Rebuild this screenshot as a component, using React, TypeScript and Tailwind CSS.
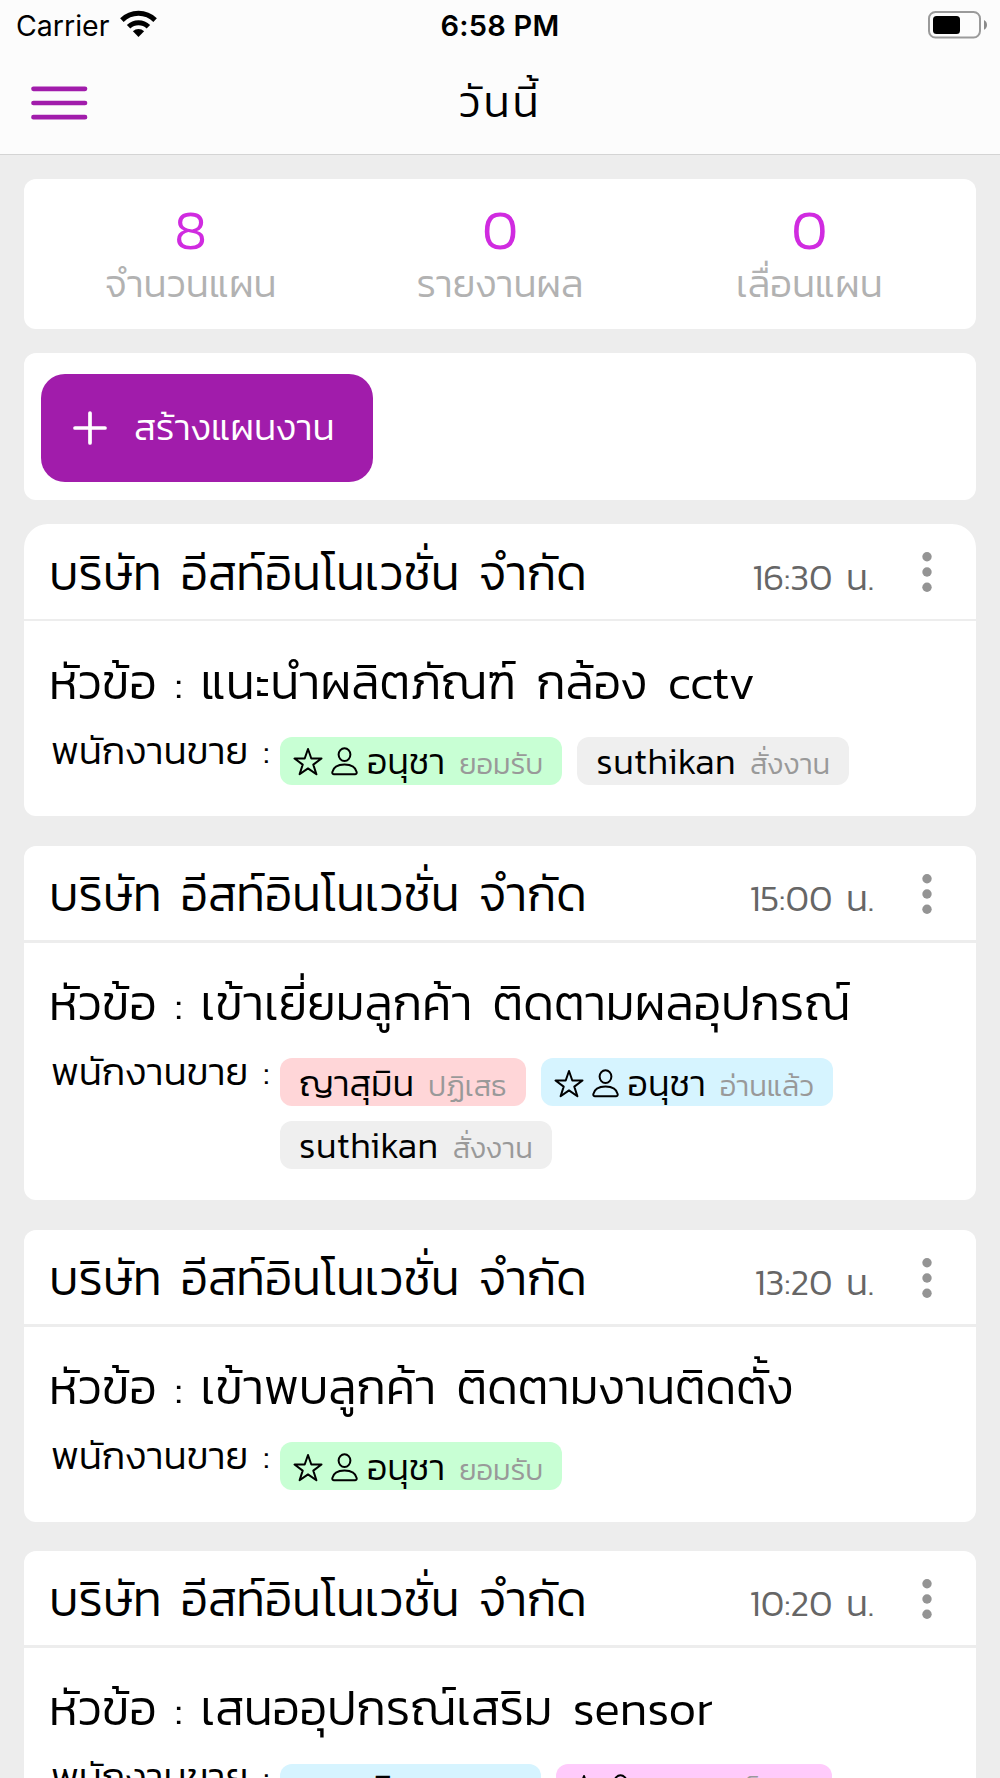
import clsx from 'clsx'

type Member = {
  name: string
  status: string
  color: string
  owner?: boolean
}

type Plan = {
  time: string
  topic: string
  members: Member[]
}

const company = 'บริษัท อีสท์อินโนเวชั่น จำกัด'

const stats = [
  { value: 8, label: 'จำนวนแผน' },
  { value: 0, label: 'รายงานผล' },
  { value: 0, label: 'เลื่อนแผน' },
]

const plans: Plan[] = [
  {
    time: '16:30 น.',
    topic: 'แนะนำผลิตภัณฑ์ กล้อง cctv',
    members: [
      { name: 'อนุชา', status: 'ยอมรับ', color: 'bg-[#c8ffd4]', owner: true },
      { name: 'suthikan', status: 'สั่งงาน', color: 'bg-[#efefef]' },
    ],
  },
  {
    time: '15:00 น.',
    topic: 'เข้าเยี่ยมลูกค้า ติดตามผลอุปกรณ์',
    members: [
      { name: 'ญาสุมิน', status: 'ปฏิเสธ', color: 'bg-[#ffd6d8]' },
      { name: 'อนุชา', status: 'อ่านแล้ว', color: 'bg-[#d6f4ff]', owner: true },
      { name: 'suthikan', status: 'สั่งงาน', color: 'bg-[#efefef]' },
    ],
  },
  {
    time: '13:20 น.',
    topic: 'เข้าพบลูกค้า ติดตามงานติดตั้ง',
    members: [
      { name: 'อนุชา', status: 'ยอมรับ', color: 'bg-[#c8ffd4]', owner: true },
    ],
  },
  {
    time: '10:20 น.',
    topic: 'เสนออุปกรณ์เสริม sensor',
    members: [
      { name: 'ญาสุมิน', status: 'อ่านแล้ว', color: 'bg-[#d6f4ff]' },
      { name: 'อนุชา', status: 'เช็คอิน', color: 'bg-[#ffcbfb]', owner: true },
    ],
  },
]

function WifiIcon() {
  return (
    <svg className="-mt-[5px]" width="37" height="27" viewBox="0 0 37 27">
      <path d="M18.5 27l-5.6-5.800a8.200 8.200 0 0 1 11.200 0z" />
      <path d="M8.600 16.800a14.200 14.200 0 0 1 19.800 0" fill="none" stroke="#000" strokeWidth="5" />
      <path d="M1.900 10.100a23.600 23.600 0 0 1 33.200 0" fill="none" stroke="#000" strokeWidth="5" />
    </svg>
  )
}

function BatteryIcon() {
  return (
    <svg className="-mt-[3px]" width="60" height="28" viewBox="0 0 60 28">
      <rect x="1" y="1" width="51" height="25.500" rx="6.500" fill="none" stroke="#9a9a9a" strokeWidth="2" />
      <rect x="5" y="5" width="27" height="18" rx="3.500" />
      <path d="M56 9c2 1 3 3 3 4.900s-1 3.900-3 4.900z" fill="#8a8a8a" />
    </svg>
  )
}

function MenuIcon() {
  return (
    <svg width="57" height="34" viewBox="0 0 57 34" stroke="#a11cab" strokeWidth="4.700" strokeLinecap="round">
      <path d="M2.500 2.800h51.500M2.500 17h51.500M2.500 31.200h51.500" />
    </svg>
  )
}

function OwnerIcons() {
  return (
    <span className="-ml-[6px] mr-[9px] flex gap-[8px] pt-[2px]">
      <svg width="30" height="29" viewBox="0 0 30 29" fill="none" stroke="#000" strokeWidth="2" strokeLinejoin="round">
        <path d="M15 2l3.300 9.500h10.200l-8.200 6.100 3.100 9.700-8.400-5.900-8.400 5.900 3.100-9.700-8.200-6.100h10.200z" />
      </svg>
      <svg width="27" height="29" viewBox="0 0 27 29" fill="none" stroke="#000" strokeWidth="2">
        <ellipse cx="13.500" cy="7.600" rx="5.900" ry="6.400" />
        <path d="M3 27.200c-1.200 0-1.900-.9-1.700-2.100 1-4.900 5.600-7.700 12.200-7.700s11.200 2.800 12.200 7.700c.2 1.200-.5 2.100-1.700 2.100z" />
      </svg>
    </span>
  )
}

function MemberChip({ member }: { member: Member }) {
  const latin = /^[a-z]+$/.test(member.name)

  return (
    <div className={clsx('flex h-12 items-center rounded-xl pl-[19px] pr-[19px]', member.color)}>
      {member.owner && <OwnerIcons />}
      <div className="flex items-baseline gap-[14px] pt-[5px] leading-[43px]">
        <span className={clsx('text-[36px]', latin && 'tracking-[0.5px]')}>{member.name}</span>
        <span className="text-[29.33px] text-[#999]">{member.status}</span>
      </div>
    </div>
  )
}

function PlanCard({ plan, first }: { plan: Plan; first: boolean }) {
  return (
    <section className={clsx('rounded-xl bg-white pb-[31.33px]', first && 'rounded-t-3xl')}>
      <div className="flex h-[94.33px] items-center pl-[25px] pr-[44px]">
        <div className="flex flex-1 items-baseline justify-between pt-[7px] leading-[87px]">
          <h2 className="text-[48px] [word-spacing:0.17em]">{company}</h2>
          <span className="text-[36.4px] text-[#666] [word-spacing:0.14em]">{plan.time}</span>
        </div>
        <svg className="ml-[48px] mt-[2px]" width="10" height="42" viewBox="0 0 10 42" fill="#949494">
          <circle cx="5" cy="5.800" r="4.700" />
          <circle cx="5" cy="21" r="4.700" />
          <circle cx="5" cy="36.200" r="4.700" />
        </svg>
      </div>
      <div className="h-[2.67px] bg-[#ededed]" />
      <p className="pl-[25px] pt-[25.33px] text-[48.2px] leading-[70px] [word-spacing:0.19em]">
        <span className="[word-spacing:0.14em]">หัวข้อ : </span>
        {plan.topic}
      </p>
      <div className="flex pl-[27px]">
        <span className="mt-[6px] w-[229px] whitespace-nowrap text-[38.6px] leading-[56px] [word-spacing:0.15em]">
          พนักงานขาย :
        </span>
        <div className="flex flex-1 flex-wrap gap-x-[15px] gap-y-[14.67px] pt-[20.33px]">
          {plan.members.map((m) => (
            <MemberChip key={m.name} member={m} />
          ))}
        </div>
      </div>
    </section>
  )
}

export default function App() {
  return (
    <div className="h-[1778px] overflow-hidden bg-[#ededed] font-['Kanit','Noto_Sans_Thai',sans-serif] font-light text-black">
      <header className="h-[155px] border-b border-[#d4d4d4] bg-[#fcfcfc]">
        <div className="grid h-[52px] grid-cols-3 items-center pl-[16px] pr-[12px] font-['Inter',sans-serif] text-[28.5px] font-normal">
          <div className="flex items-center gap-[11px]">
            <span>Carrier</span>
            <WifiIcon />
          </div>
          <span className="-ml-[4px] text-center text-[29px] font-semibold tracking-[0.2px]">6:58 PM</span>
          <div className="flex justify-end">
            <BatteryIcon />
          </div>
        </div>
        <div className="grid h-[102px] grid-cols-3 items-center px-[31px]">
          <MenuIcon />
          <h1 className="-mt-[3px] text-center text-[43.5px] leading-[90px] tracking-[3px]">วันนี้</h1>
        </div>
      </header>

      <main className="flex flex-col px-6 pt-6">
        <section className="grid h-[150px] grid-cols-3 rounded-xl bg-white px-3 pt-[22px] text-center">
          {stats.map((s) => (
            <div key={s.label}>
              <p className="text-[56px] leading-[56px] text-[#d02be0]">{s.value}</p>
              <p className="text-[38.4px] leading-[53px] text-[#b2b2b2]">{s.label}</p>
            </div>
          ))}
        </section>

        <section className="mt-6 h-[147px] rounded-xl bg-white pl-[17px] pt-[21px]">
          <button className="flex h-[108px] w-[332px] items-center rounded-3xl bg-[#a11cab] pl-8 text-[36.9px] font-light text-white">
            <svg width="34" height="34" viewBox="0 0 34 34" stroke="#fff" strokeWidth="3.700" strokeLinecap="round">
              <path d="M2 17h30M17 2v30" />
            </svg>
            <span className="-mt-[1px] ml-[27px]">สร้างแผนงาน</span>
          </button>
        </section>

        <div className="mt-[24.33px] flex flex-col gap-[29.33px]">
          {plans.map((plan, i) => (
            <PlanCard key={plan.time} plan={plan} first={i === 0} />
          ))}
        </div>
      </main>
    </div>
  )
}
